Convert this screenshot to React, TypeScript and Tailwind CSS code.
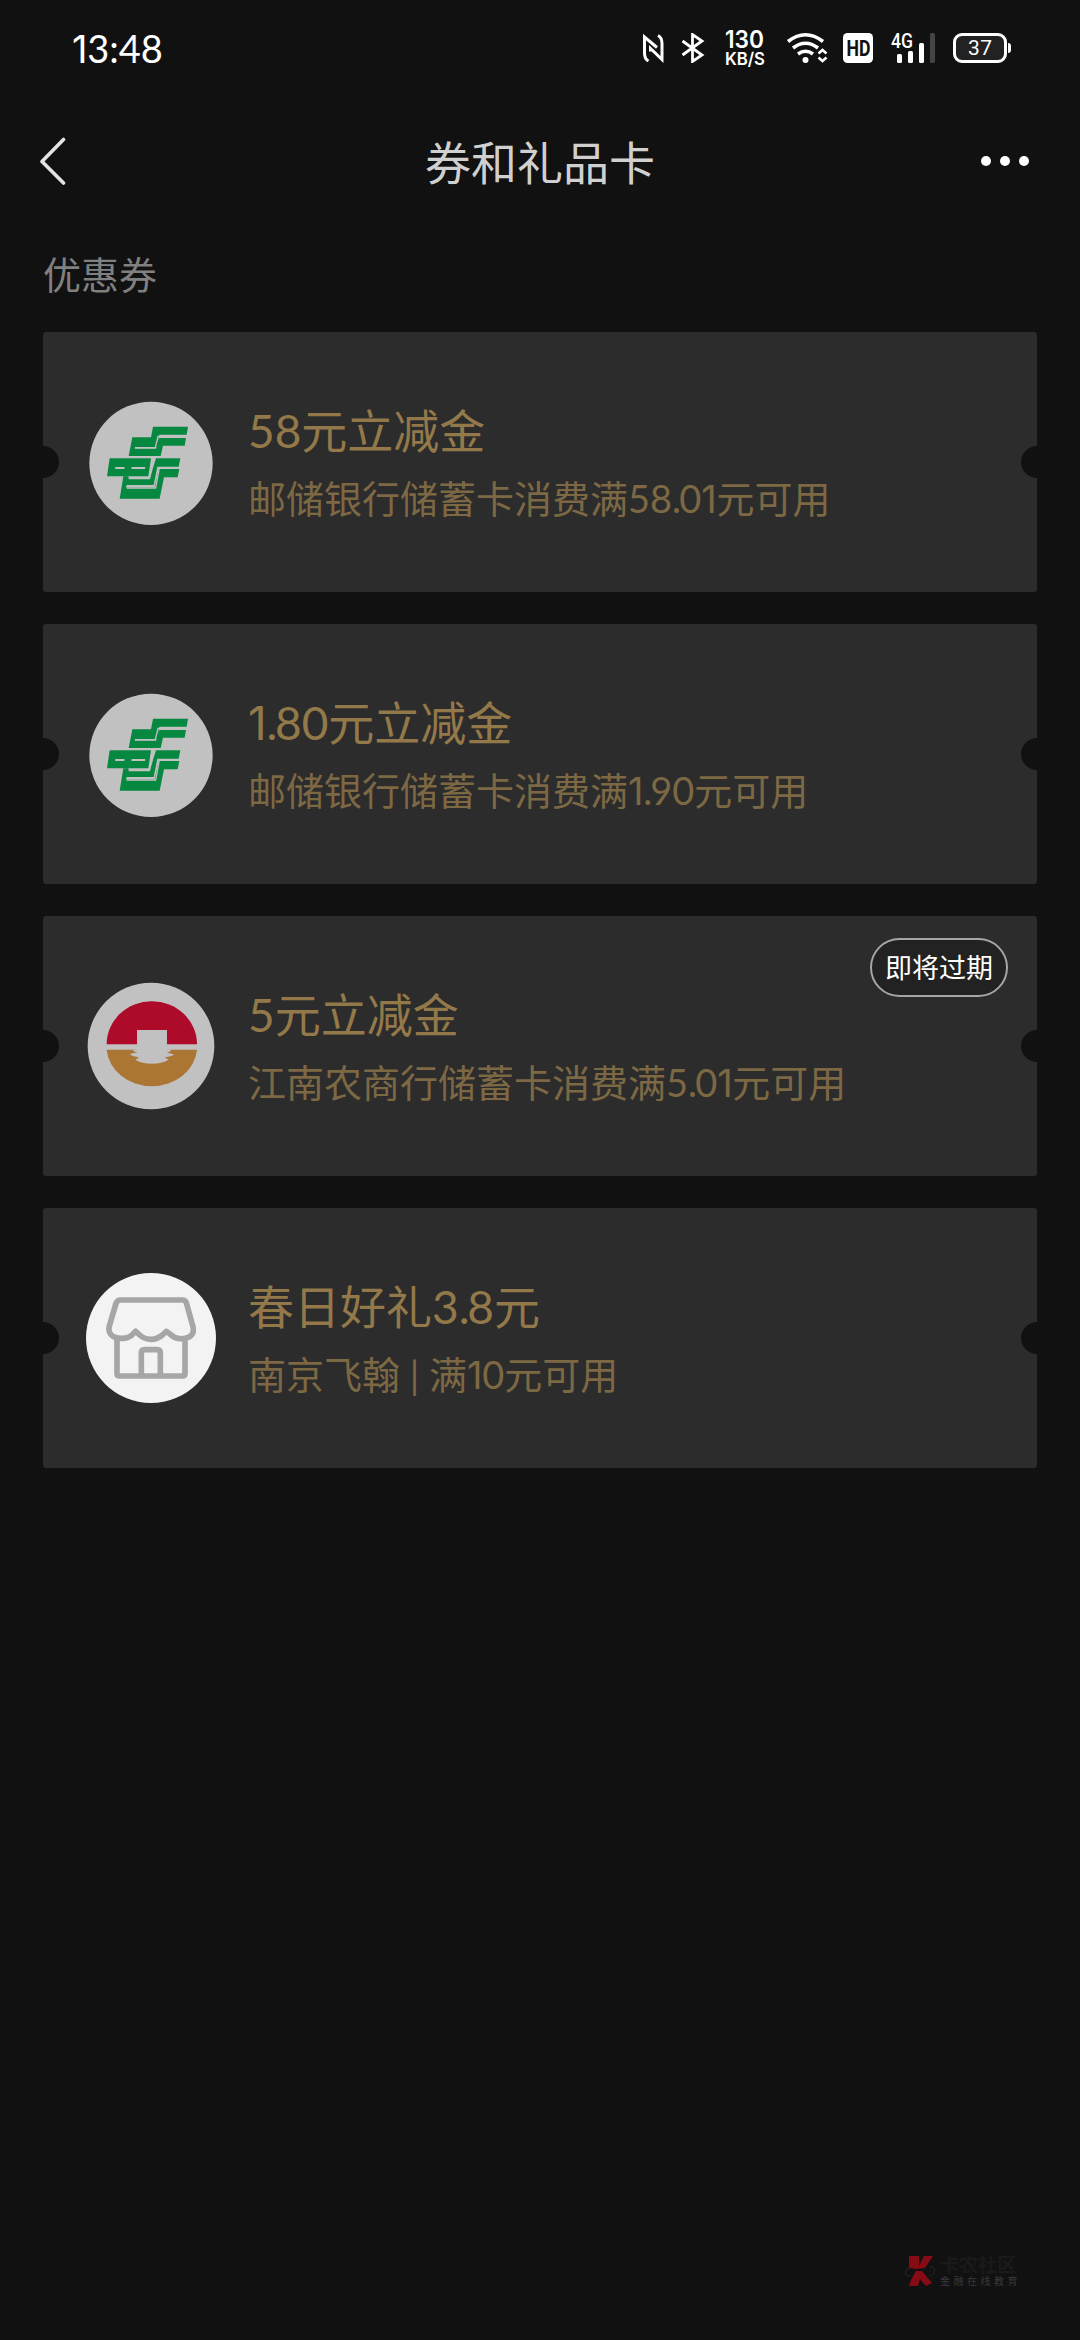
import type { ReactNode } from "react";

/* Proportional figures: a narrow, footless "1" and a tight decimal point. */
function Txt({ children }: { children: string }) {
  return (
    <>
      {children.split(/([1.])/).map((part, i) =>
        part === "1" ? (
          <span key={i} className="inline-block w-[0.4em] text-center font-[Inter] leading-none">1</span>
        ) : part === "." ? (
          <span key={i} className="-mr-[0.05em]">.</span>
        ) : (
          part
        ),
      )}
    </>
  );
}

function StatusBar() {
  return (
    <div className="flex h-[96px] items-center text-white">
      <div className="ml-[72px] w-[100px] whitespace-nowrap text-[38px] leading-none">
        <Txt>13:48</Txt>
      </div>
      <div className="ml-auto mr-[66px] flex items-center">
        <svg className="h-[30px] w-[24px]" viewBox="0 0 24 30" fill="none" stroke="currentColor" strokeWidth="3">
          <path d="M6.500 28Q2.500 26 2.500 20V4L15 14.500" />
          <path d="M16 2.500Q20 4.500 20 10.500V26.500L8.500 15.500V18.500" />
        </svg>
        <svg className="ml-[15px] h-[30px] w-[24px]" viewBox="0 0 24 30" fill="none" stroke="currentColor" strokeWidth="2.8">
          <path d="M1.500 8L21 22L11.500 28.500V1.500L21 8L1.500 22" />
        </svg>
        <svg className="ml-[19px] h-[40px] w-[42px] overflow-visible" viewBox="0 0 42 40" fill="currentColor">
          <text x="1" y="20" fontFamily="Inter" fontWeight="600" fontSize="24" textLength="39" lengthAdjust="spacingAndGlyphs">130</text>
          <text x="1" y="37" fontFamily="Inter" fontWeight="600" fontSize="17.500" textLength="40" lengthAdjust="spacingAndGlyphs">KB/S</text>
        </svg>
        <svg className="ml-[21px] h-[30px] w-[40px] overflow-visible" viewBox="0 0 40 30" fill="none" stroke="currentColor" strokeWidth="3.6">
          <path d="M1 8.500Q18.500 -5 36 8.500" />
          <path d="M6 15Q18.500 5.500 31 15" />
          <path d="M11 21Q18.500 15.500 26 21" />
          <circle cx="18.500" cy="27" r="3" fill="currentColor" stroke="none" />
          <path d="M31.500 20.500L35.500 17L39.500 20.500M31.500 24.500L35.500 28L39.500 24.500" strokeWidth="2.600" />
        </svg>
        <svg className="ml-[16px] h-[30px] w-[30px] overflow-visible" viewBox="0 0 30 30">
          <rect width="30" height="30" rx="4.500" fill="#fff" />
          <text x="3.500" y="22.800" fontFamily="Roboto" fontWeight="700" fontSize="22" fill="#111" textLength="24" lengthAdjust="spacingAndGlyphs">HD</text>
        </svg>
        <svg className="ml-[18px] h-[30px] w-[45px] overflow-visible" viewBox="0 0 45 30" fill="currentColor">
          <text x="0" y="14.500" fontFamily="Roboto" fontWeight="500" fontSize="19.500" textLength="22" lengthAdjust="spacingAndGlyphs">4G</text>
          <rect x="6" y="21" width="5" height="9" rx="1.500" />
          <rect x="17" y="18" width="5" height="12" rx="1.500" />
          <rect x="28" y="10" width="5" height="20" rx="1.500" />
          <rect x="39" y="0" width="5" height="30" rx="1.500" fill="#454545" />
        </svg>
        <svg className="ml-[17px] h-[30px] w-[61px]" viewBox="0 0 61 30">
          <rect x="1.500" y="1.500" width="51" height="27" rx="7.500" fill="#222" stroke="#fff" strokeWidth="3" />
          <path d="M55 10Q58 10 58 13V17Q58 20 55 20Z" fill="#fff" />
          <text x="15" y="22.200" fontFamily="Roboto" fontSize="21" fill="#fff" textLength="24" lengthAdjust="spacing">37</text>
        </svg>
      </div>
    </div>
  );
}

function Header() {
  return (
    <header className="flex h-[130px] items-center justify-between pl-[39px] pr-[51px]">
      <svg className="h-[48px] w-[48px]" viewBox="0 0 48 48" fill="none" stroke="#e4e4e4" strokeWidth="3.600" strokeLinecap="round" strokeLinejoin="round">
        <path d="M24.500 2.500L3 24.500L24.500 46" />
      </svg>
      <h1 className="ml-[12px] mt-[3px] text-[46px] leading-[60px] text-[#d0d0d0]">券和礼品卡</h1>
      <div className="flex w-[48px] justify-between">
        <i className="size-[10px] rounded-full bg-white" />
        <i className="size-[10px] rounded-full bg-white" />
        <i className="size-[10px] rounded-full bg-white" />
      </div>
    </header>
  );
}

function PostalLogo() {
  return (
    <svg className="size-[130px]" viewBox="48 52 390 390">
      <circle cx="243" cy="251" r="185" fill="#c1c1c1" />
      <g fill="#078840">
        <path d="M249 141H354L350 165H268L262 202H195L194 207H258L268 175H348L344 198H279L272 229H176L187 173H243Z" />
        <path d="M119 236H243L235 290H111Z" />
        <path d="M258 236H331L326 261H262L251 316H171L167 323H254L266 268H328L323 293H282L269 357H149L160 290H175L177 297H240L250 261Z" />
      </g>
      <path d="M195 204H256L264 170H350M170 325H257L268 265H327M176 297H238L251 234" fill="none" stroke="#c1c1c1" strokeWidth="4" />
      <path d="M136 262H164L163 268H135ZM185 262H226L225 268H184Z" fill="#c1c1c1" />
    </svg>
  );
}

function JiangnanLogo() {
  return (
    <svg className="size-[130px]" viewBox="48 48 390 390">
      <circle cx="243" cy="243" r="190" fill="#c1c1c1" />
      <path d="M110 238A135 129 0 0 1 381 238Z" fill="#ae0a2a" />
      <path d="M110 254H381A136 120 0 0 1 110 254Z" fill="#ab7633" />
      <path d="M201 195H291V254H304Q301 261 290 263Q304 264 313 269Q299 276 284 277L296 284Q277 296 246 296Q214 296 196 285L207 277Q188 275 179 268Q190 264 204 262Q191 260 188 254H201Z" fill="#c1c1c1" />
    </svg>
  );
}

function ShopLogo() {
  return (
    <svg className="size-[130px]" viewBox="48 54 390 390">
      <circle cx="243" cy="249" r="195" fill="#f3f3f3" />
      <g fill="none" stroke="#a6a6a6" strokeWidth="17" strokeLinejoin="round">
        <path d="M151 135H337Q346 135 349 143L369 215Q373 232 363 242Q350 253 329 251Q311 249 300 237L289 229L277 240Q262 253 243 253Q223 253 209 240L197 229L185 241Q173 251 154 250Q133 250 123 239Q114 229 118 213L138 145Q142 135 151 135Z" />
        <path d="M141 250V355Q141 363 149 363H337Q345 363 345 355V250" />
        <path d="M214 362V294Q214 284 224 284H261Q271 284 271 294V362" />
      </g>
    </svg>
  );
}

interface CouponProps {
  logo: ReactNode;
  title: string;
  detail: string;
  tag?: string;
}

function Coupon({ logo, title, detail, tag }: CouponProps) {
  return (
    <article className="relative flex h-[260px] items-center overflow-hidden rounded-[3px] bg-[#2c2c2c] pl-[43px]">
      <i className="absolute -left-[16px] top-[114px] size-[32px] rounded-full bg-[#111]" />
      <i className="absolute -right-[16px] top-[114px] size-[32px] rounded-full bg-[#111]" />
      {logo}
      <div className="ml-[32px] mt-[6px] whitespace-nowrap">
        <h2 className="h-[68px] text-[46px] leading-[68px] text-[#937949]">
          <Txt>{title}</Txt>
        </h2>
        <p className="h-[68px] text-[38px] leading-[67px] text-[#7d6844]">
          <Txt>{detail}</Txt>
        </p>
      </div>
      {tag && (
        <span className="absolute right-[29px] top-[22px] flex h-[59px] w-[138px] items-center justify-center rounded-full border-2 border-[#a5a5a5] bg-[#222] pt-[2px] text-[27px] text-white">
          {tag}
        </span>
      )}
    </article>
  );
}

function Watermark() {
  return (
    <footer className="mr-[59px] flex items-center self-end pb-[53px]">
      <svg className="h-[32px] w-[32px]" viewBox="0 0 32 32">
        <path d="M5 1H15V11L20 1H29L21 13L12 14L5 13ZM12 16L18 16L28 28L22 31L16 24L14 31H5L7 25Z" fill="#870b14" />
        <path d="M6 14C0 13 0 22 6 21M26 12C32 11 32 20 26 21" fill="none" stroke="#2a2a2a" strokeWidth="1" />
      </svg>
      <div className="ml-[4px]">
        <div className="text-[19px] font-bold leading-[20px] text-[#1a1a1a]">卡农社区</div>
        <div className="text-[10px] leading-[12px] tracking-[3.500px] text-[#3a3a3a]">金融在线教育</div>
      </div>
    </footer>
  );
}

export default function App() {
  return (
    <main className="flex h-[2340px] w-[1080px] flex-col overflow-hidden bg-[#111] font-[Lato,'Noto_Sans_CJK_SC',sans-serif]">
      <StatusBar />
      <Header />
      <h2 className="ml-[43px] mt-[18px] text-[38px] leading-[60px] text-[#808080]">优惠券</h2>
      <section className="mx-[43px] mt-[28px] flex flex-col gap-[32px]">
        <Coupon logo={<PostalLogo />} title="58元立减金" detail="邮储银行储蓄卡消费满58.01元可用" />
        <Coupon logo={<PostalLogo />} title="1.80元立减金" detail="邮储银行储蓄卡消费满1.90元可用" />
        <Coupon logo={<JiangnanLogo />} title="5元立减金" detail="江南农商行储蓄卡消费满5.01元可用" tag="即将过期" />
        <Coupon logo={<ShopLogo />} title="春日好礼3.8元" detail="南京飞翰 | 满10元可用" />
      </section>
      <div className="flex-1" />
      <Watermark />
    </main>
  );
}
